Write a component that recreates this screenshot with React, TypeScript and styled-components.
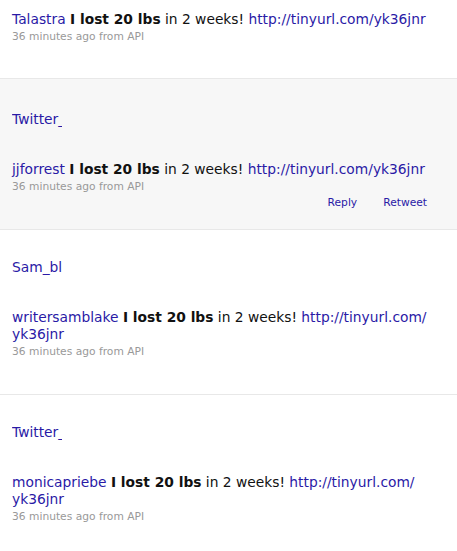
import React from "react";
import styled, { createGlobalStyle } from "styled-components";

const Global = createGlobalStyle`
  html, body { margin: 0; padding: 0; background: #fff; }
  body { font-family: "DejaVu Sans", "Liberation Sans", sans-serif; }
`;

const List = styled.ol`
  list-style: none;
  margin: 0;
  padding: 0;
  width: 457px;
`;

const Item = styled.li<{ $first?: boolean; $hover?: boolean }>`
  display: flex;
  flex-direction: column;
  padding: ${(p) => (p.$first ? "11px" : p.$hover ? "32px" : "29px")} 20px
    ${(p) => (p.$hover ? "18px" : p.$first ? "33px" : "34px")} 12px;
  background: ${(p) => (p.$hover ? "#f7f7f7" : "#fff")};
  border-bottom: 1px solid #e8e8e8;
`;

const Avatar = styled.span`
  display: block;
  width: 50px;
  height: 16px;
  overflow: hidden;
  white-space: nowrap;
  color: #2a1aa6;
  font-size: 13.8px;
  line-height: 16px;
  margin-bottom: 34px;
`;

const Body = styled.p`
  margin: 0;
  font-size: 13.8px;
  line-height: 17px;
  color: #111;
`;

const Link = styled.a`
  color: #2a1aa6;
  text-decoration: none;
`;

const Strong = styled.strong`
  font-weight: bold;
  color: #111;
`;

const Meta = styled.div`
  margin-top: 1px;
  font-size: 10.7px;
  line-height: 16px;
  color: #999;
`;

const Actions = styled.div`
  display: flex;
  justify-content: flex-end;
  gap: 26px;
  padding-right: 10px;
`;

const Action = styled.a`
  font-size: 10.7px;
  line-height: 16px;
  color: #2a1aa6;
  text-decoration: none;
`;

type Tweet = {
  user: string;
  avatar?: string;
  hover?: boolean;
};

const tweets: Tweet[] = [
  { user: "Talastra" },
  { user: "jjforrest", avatar: "Twitter_Logo", hover: true },
  { user: "writersamblake", avatar: "Sam_blake" },
  { user: "monicapriebe", avatar: "Twitter_Logo" },
];

export default function App() {
  return (
    <>
      <Global />
      <List>
        {tweets.map((t, i) => (
          <Item key={t.user} $first={i === 0} $hover={t.hover}>
            {t.avatar && <Avatar>{t.avatar}</Avatar>}
            <Body>
              <Link href="#">{t.user}</Link> <Strong>I lost 20 lbs</Strong> in 2
              weeks!{" "}
              <Link href="#">
                http://tinyurl.com/
                <wbr />
                yk36jnr
              </Link>
            </Body>
            <Meta>36 minutes ago from API</Meta>
            {t.hover && (
              <Actions>
                <Action href="#">Reply</Action>
                <Action href="#">Retweet</Action>
              </Actions>
            )}
          </Item>
        ))}
      </List>
    </>
  );
}
